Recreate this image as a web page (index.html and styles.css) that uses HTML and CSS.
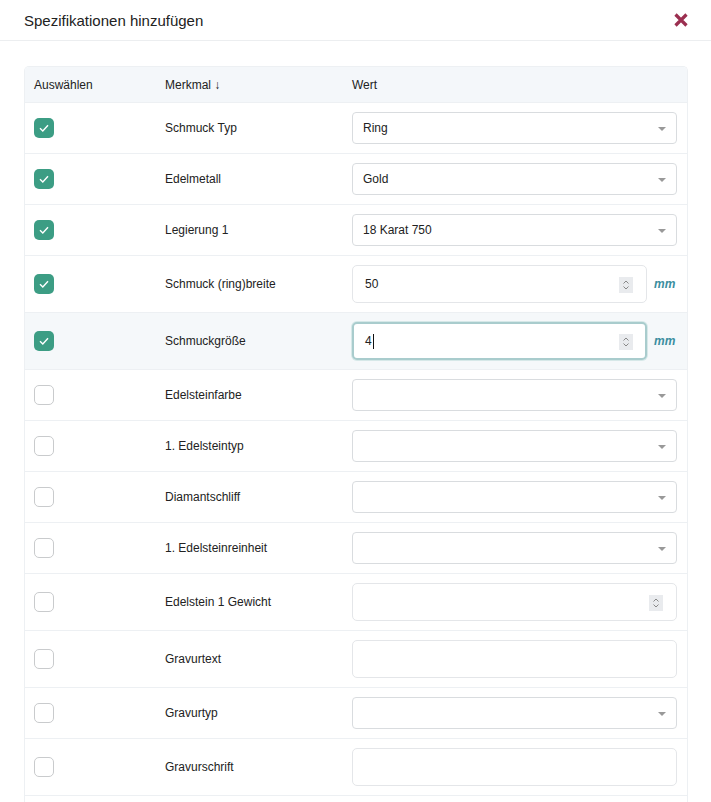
FILE: index.html
```html
<!DOCTYPE html>
<html lang="de">
<head>
    <meta charset="UTF-8">
    <meta name="viewport" content="width=device-width, initial-scale=1.0">
    <title>Spezifikationen hinzufügen</title>
    <link rel="stylesheet" href="styles.css">
</head>
<body>
    <div class="modal">
        <div class="modal-header">
            <h1 class="modal-title">Spezifikationen hinzufügen</h1>
            <button class="close-button" aria-label="Schließen">
                <svg width="16" height="16" viewBox="0 0 16 16"><path d="M2.5 2.5 L13.5 13.5 M13.5 2.5 L2.5 13.5" stroke="#9b2f50" stroke-width="3.2" stroke-linecap="butt"/></svg>
            </button>
        </div>
        <div class="modal-body">
            <div class="spec-card">
                <table class="spec-table">
                    <thead>
                        <tr>
                            <th class="col-select">Auswählen</th>
                            <th class="col-name">Merkmal <span class="sort-arrow">↓</span></th>
                            <th class="col-value">Wert</th>
                        </tr>
                    </thead>
                    <tbody>
                        <tr>
                            <td><span class="check checked"></span></td>
                            <td>Schmuck Typ</td>
                            <td><div class="select">Ring</div></td>
                        </tr>
                        <tr>
                            <td><span class="check checked"></span></td>
                            <td>Edelmetall</td>
                            <td><div class="select">Gold</div></td>
                        </tr>
                        <tr>
                            <td><span class="check checked"></span></td>
                            <td>Legierung 1</td>
                            <td><div class="select">18 Karat 750</div></td>
                        </tr>
                        <tr>
                            <td><span class="check checked"></span></td>
                            <td>Schmuck (ring)breite</td>
                            <td>
                                <div class="unit-field">
                                    <div class="number">50<span class="spinner"></span></div>
                                    <span class="unit">mm</span>
                                </div>
                            </td>
                        </tr>
                        <tr class="active-row">
                            <td><span class="check checked"></span></td>
                            <td>Schmuckgröße</td>
                            <td>
                                <div class="unit-field">
                                    <div class="number focused">4<span class="caret"></span><span class="spinner"></span></div>
                                    <span class="unit">mm</span>
                                </div>
                            </td>
                        </tr>
                        <tr>
                            <td><span class="check"></span></td>
                            <td>Edelsteinfarbe</td>
                            <td><div class="select"></div></td>
                        </tr>
                        <tr>
                            <td><span class="check"></span></td>
                            <td>1. Edelsteintyp</td>
                            <td><div class="select"></div></td>
                        </tr>
                        <tr>
                            <td><span class="check"></span></td>
                            <td>Diamantschliff</td>
                            <td><div class="select"></div></td>
                        </tr>
                        <tr>
                            <td><span class="check"></span></td>
                            <td>1. Edelsteinreinheit</td>
                            <td><div class="select"></div></td>
                        </tr>
                        <tr>
                            <td><span class="check"></span></td>
                            <td>Edelstein 1 Gewicht</td>
                            <td><div class="number wide"><span class="spinner"></span></div></td>
                        </tr>
                        <tr>
                            <td><span class="check"></span></td>
                            <td>Gravurtext</td>
                            <td><div class="text-input"></div></td>
                        </tr>
                        <tr>
                            <td><span class="check"></span></td>
                            <td>Gravurtyp</td>
                            <td><div class="select"></div></td>
                        </tr>
                        <tr>
                            <td><span class="check"></span></td>
                            <td>Gravurschrift</td>
                            <td><div class="text-input"></div></td>
                        </tr>
                        <tr class="spacer-row">
                            <td></td>
                            <td></td>
                            <td></td>
                        </tr>
                    </tbody>
                </table>
            </div>
        </div>
    </div>
</body>
</html>
```

FILE: styles.css
```css
body, html {
    margin: 0;
    padding: 0;
    background: #fff;
    color: #222;
    font-family: "Liberation Sans", Arial, sans-serif;
}
.modal-header {
    display: flex;
    justify-content: space-between;
    align-items: center;
    height: 40px;
    padding: 0 22px 0 24px;
    border-bottom: 1px solid #eceef0;
}
.modal-title {
    margin: 0;
    font-size: 15px;
    font-weight: normal;
    color: #222;
}
.close-button {
    background: none;
    border: none;
    padding: 0;
    display: flex;
}
.modal-body {
    padding: 25px 23px 0 24px;
}
.spec-card {
    border: 1px solid #edf0f3;
    border-bottom: none;
    border-radius: 5px 5px 0 0;
    overflow: hidden;
}
.spec-table {
    width: 100%;
    border-collapse: collapse;
    font-size: 12px;
}
.spec-table th {
    background: #f4f7fa;
    font-weight: normal;
    text-align: left;
    height: 35px;
    padding: 0 10px 0 9px;
    color: #222;
}
.col-select { width: 112px; }
.col-name { width: 168px; }
.sort-arrow {
    font-size: 12px;
}
.spec-table td {
    border-top: 1px solid #edf0f3;
    padding: 9px 10px 9px 9px;
    vertical-align: middle;
}
.spec-table tr:nth-child(-n+9) td:first-child ~ td {
    padding-bottom: 9px;
}
.spacer-row td {
    height: 20px;
    padding: 0;
}
.active-row td {
    background: #f5f8fa;
}
.check {
    display: block;
    box-sizing: border-box;
    width: 20px;
    height: 20px;
    border: 1px solid #c9cbcd;
    border-radius: 5px;
    background: #fff;
}
.check.checked {
    border: none;
    background: #3c9d84 url("data:image/svg+xml,%3Csvg xmlns='http://www.w3.org/2000/svg' width='20' height='20'%3E%3Cpath d='M6 10.3 L8.8 13 L14 7.2' fill='none' stroke='white' stroke-width='1.4'/%3E%3C/svg%3E") no-repeat center;
}
.select, .number, .text-input {
    box-sizing: border-box;
    position: relative;
    display: flex;
    align-items: center;
    background: #fff;
    border: 1px solid #d9dcdf;
    border-radius: 4px;
    color: #222;
}
.select {
    height: 32px;
    padding: 0 10px;
}
.select::after {
    content: "";
    position: absolute;
    right: 10px;
    top: 14px;
    border-left: 4px solid transparent;
    border-right: 4px solid transparent;
    border-top: 4px solid #999;
}
.text-input {
    height: 38px;
    border-color: #e4e6e9;
    border-radius: 5px;
}
.unit-field {
    display: flex;
    align-items: center;
    gap: 7px;
}
.number {
    flex: 1;
    height: 38px;
    padding: 0 12px;
    border-color: #e4e6e9;
    border-radius: 5px;
}
.number.wide {
    flex: none;
}
.number.focused {
    border: 2px solid #a9cccd;
    padding: 0 11px;
    box-shadow: 0 0 0 1px #d6e8e8;
}
.caret {
    display: inline-block;
    width: 1px;
    height: 15px;
    margin-left: 1px;
    background: #111;
}
.spinner {
    position: absolute;
    right: 13px;
    top: 11px;
    width: 14px;
    height: 16px;
    background: #e9ebee url("data:image/svg+xml,%3Csvg xmlns='http://www.w3.org/2000/svg' width='14' height='16'%3E%3Cpath d='M4.5 6.5 L7 4 L9.5 6.5 M4.5 9.5 L7 12 L9.5 9.5' fill='none' stroke='%23888' stroke-width='1'/%3E%3C/svg%3E") no-repeat center;
}
.number.focused .spinner {
    right: 12px;
    top: 10px;
}
.unit {
    font-style: italic;
    font-weight: bold;
    color: #3b8ea0;
    width: 23px;
}
```
